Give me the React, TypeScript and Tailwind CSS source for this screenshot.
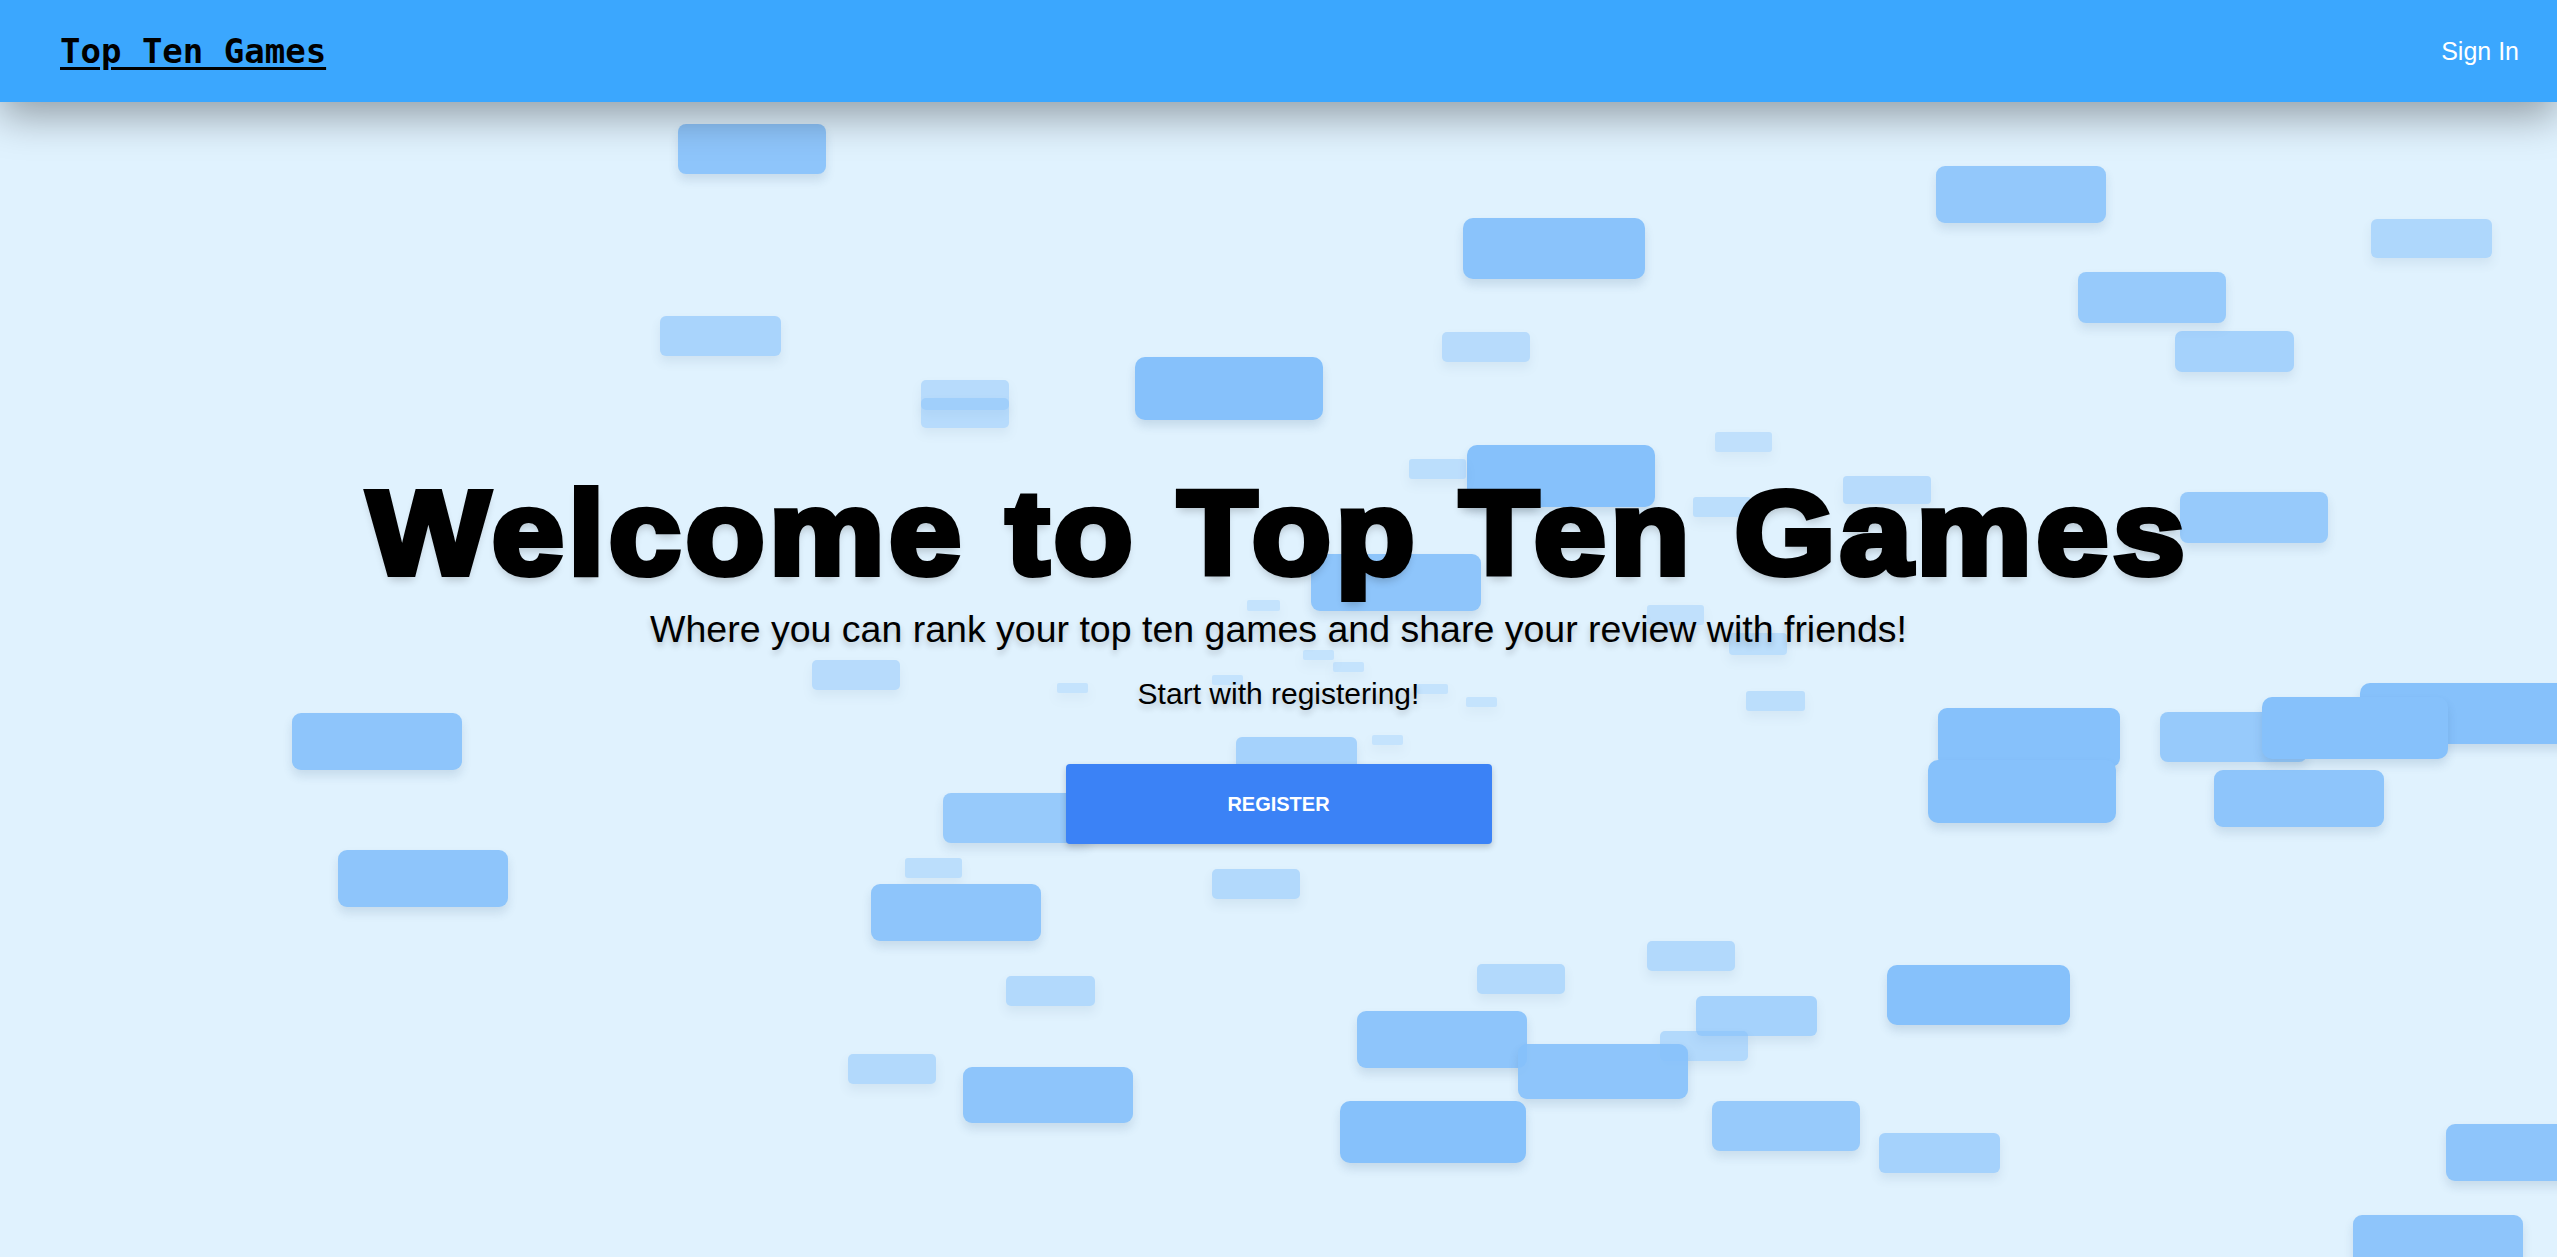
import React from 'react';

// floating tiles in the background: x, y, width, height, opacity
const tiles: [number, number, number, number, number][] = [
  [678, 124, 148, 50, 0.9],
  [1936, 166, 170, 57, 0.85],
  [1463, 218, 182, 61, 0.95],
  [2371, 219, 121, 39, 0.55],
  [2078, 272, 148, 51, 0.8],
  [660, 316, 121, 40, 0.6],
  [1442, 332, 88, 30, 0.45],
  [2175, 331, 119, 41, 0.65],
  [921, 380, 88, 30, 0.45],
  [921, 398, 88, 30, 0.45],
  [1135, 357, 188, 63, 1],
  [1715, 432, 57, 20, 0.35],
  [1467, 445, 188, 62, 1],
  [1409, 459, 57, 20, 0.4],
  [1843, 476, 88, 28, 0.45],
  [1693, 497, 58, 20, 0.4],
  [2180, 492, 148, 51, 0.8],
  [1311, 554, 170, 57, 0.9],
  [812, 660, 88, 30, 0.45],
  [1729, 633, 58, 22, 0.4],
  [1647, 605, 57, 20, 0.35],
  [1247, 600, 33, 11, 0.3],
  [1303, 650, 31, 10, 0.3],
  [1333, 662, 31, 10, 0.3],
  [1212, 675, 31, 10, 0.3],
  [1057, 683, 31, 10, 0.3],
  [1417, 684, 31, 10, 0.3],
  [1466, 697, 31, 10, 0.3],
  [1372, 735, 31, 10, 0.3],
  [1746, 691, 59, 20, 0.4],
  [292, 713, 170, 57, 0.9],
  [1938, 708, 182, 59, 1],
  [2160, 712, 147, 50, 0.8],
  [2360, 683, 220, 61, 1],
  [2262, 697, 186, 62, 1],
  [1928, 760, 188, 63, 1],
  [2214, 770, 170, 57, 0.9],
  [1236, 737, 121, 40, 0.65],
  [943, 793, 148, 50, 0.8],
  [905, 858, 57, 20, 0.4],
  [1212, 869, 88, 30, 0.5],
  [338, 850, 170, 57, 0.9],
  [871, 884, 170, 57, 0.9],
  [1647, 941, 88, 30, 0.5],
  [1477, 964, 88, 30, 0.5],
  [1006, 976, 89, 30, 0.5],
  [1887, 965, 183, 60, 1],
  [1696, 996, 121, 40, 0.65],
  [1660, 1031, 88, 30, 0.5],
  [1357, 1011, 170, 57, 0.9],
  [1518, 1044, 170, 55, 0.9],
  [848, 1054, 88, 30, 0.5],
  [963, 1067, 170, 56, 0.9],
  [1340, 1101, 186, 62, 1],
  [1712, 1101, 148, 50, 0.8],
  [1879, 1133, 121, 40, 0.65],
  [2446, 1124, 170, 57, 0.9],
  [2353, 1215, 170, 57, 0.9],
];

const App: React.FC = () => {
  return (
    <div className="relative w-full h-screen overflow-hidden bg-[#e0f2fe] font-['Liberation_Sans',Arial,sans-serif]">
      <div className="absolute inset-0">
        {tiles.map(([x, y, w, h, o], i) => (
          <div
            key={i}
            className="absolute bg-[#86c1fb] shadow-[0_6px_10px_rgba(40,80,120,0.15)]"
            style={{ left: x, top: y, width: w, height: h, opacity: o, borderRadius: Math.round(h * 0.16) }}
          />
        ))}
      </div>

      <header className="relative z-20 h-[102px] flex items-center justify-between pl-[60px] pr-[38px] bg-[#3ba7fe] shadow-[0_14px_40px_rgba(0,0,0,0.35)]">
        <a className="font-['DejaVu_Sans_Mono',monospace] font-bold text-[34px] leading-none text-black underline decoration-[3px] underline-offset-[4px]">
          Top Ten Games
        </a>
        <span className="text-[25px] leading-none text-white">Sign In</span>
      </header>

      <main className="relative z-10 flex flex-col items-center pt-[372px] text-black">
        <h1 className="text-[118px] leading-none font-bold tracking-[4px] scale-x-[1.1] [-webkit-text-stroke:6px_black] [text-shadow:0_6px_8px_rgba(0,0,0,0.2)] whitespace-nowrap">
          Welcome to Top Ten Games
        </h1>
        <p className="mt-[19px] text-[37.5px] leading-none [text-shadow:0_4px_6px_rgba(0,0,0,0.2)]">
          Where you can rank your top ten games and share your review with friends!
        </p>
        <p className="mt-[30px] text-[30px] leading-none [text-shadow:0_4px_6px_rgba(0,0,0,0.2)]">
          Start with registering!
        </p>
        <button className="mt-[55px] w-[426px] h-[80px] rounded-[4px] bg-[#3b82f6] text-white text-[20px] font-bold uppercase shadow-[0_3px_6px_rgba(0,0,0,0.2)]">
          Register
        </button>
      </main>
    </div>
  );
};

export default App;
